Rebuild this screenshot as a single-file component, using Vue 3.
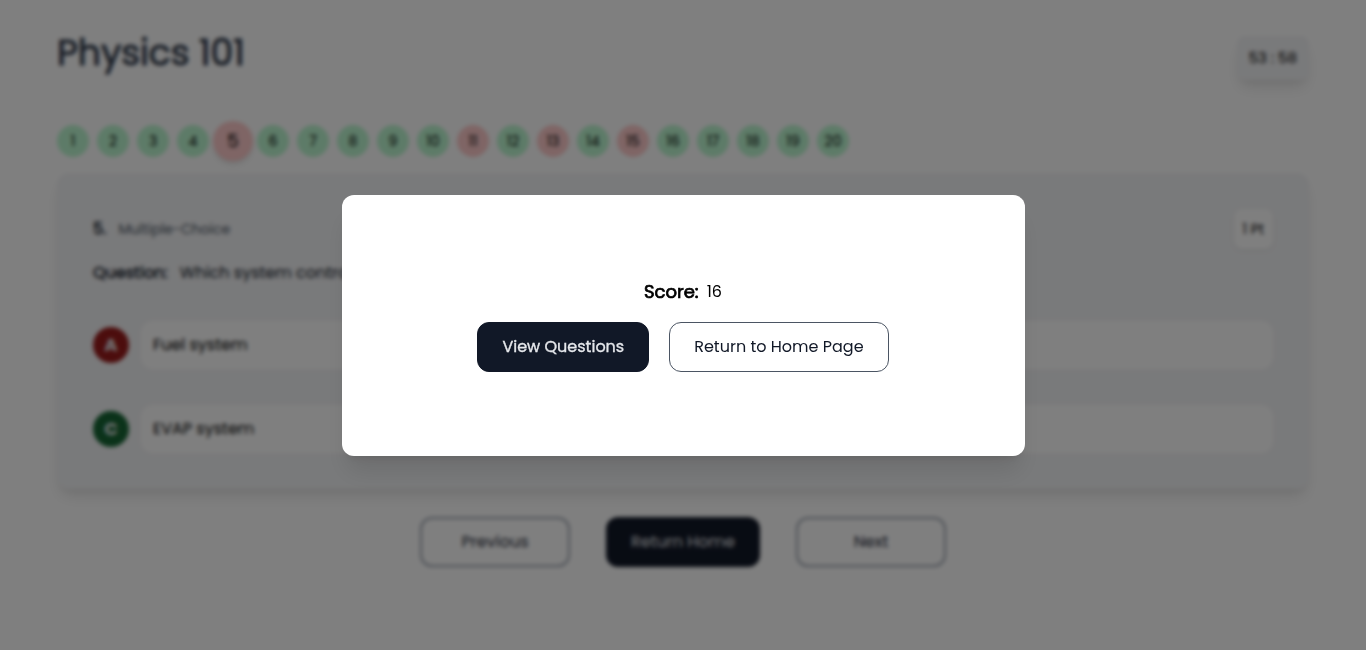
<script setup>
const wrong = [5, 11, 13, 15]
const current = 5
const questions = Array.from({ length: 20 }, (_, i) => i + 1)
const options = [
  { letter: 'A', text: 'Fuel system', state: 'wrong' },
  { letter: 'C', text: 'EVAP system', state: 'right' },
]
</script>

<template>
  <div class="page">
    <header class="top">
      <h1>Physics 101</h1>
      <div class="timer">53 : 58</div>
    </header>

    <nav class="numbers" aria-label="Questions">
      <button
        v-for="n in questions"
        :key="n"
        type="button"
        class="number"
        :class="{ wrong: wrong.includes(n), current: n === current }"
      >{{ n }}</button>
    </nav>

    <main class="card">
      <div class="meta">
        <div class="kind"><strong>5.</strong><span>Multiple-Choice</span></div>
        <div class="points">1 Pt</div>
      </div>
      <p class="question"><strong>Question:</strong><span>Which system controls</span></p>
      <div class="options">
        <div v-for="o in options" :key="o.letter" class="option">
          <button type="button" class="letter" :class="o.state">{{ o.letter }}</button>
          <div class="answer">{{ o.text }}</div>
        </div>
      </div>
    </main>

    <footer class="actions">
      <button type="button" class="step">Previous</button>
      <button type="button" class="home">Return Home</button>
      <button type="button" class="step">Next</button>
    </footer>
  </div>

  <div class="overlay">
    <section class="modal" role="dialog" aria-modal="true" aria-label="Score">
      <p class="score"><strong>Score:</strong><span>16</span></p>
      <div class="choices">
        <button type="button" class="view">View Questions</button>
        <button type="button" class="back">Return to Home Page</button>
      </div>
    </section>
  </div>
</template>

<style>
body {
  background: #fff;
}
</style>

<style scoped>
.page,
.overlay {
  font-family: Poppins, Inter, 'Open Sans', sans-serif;
  font-size: 16px;
  line-height: 24px;
  color: #111827;
  box-sizing: border-box;
}
button {
  font: inherit;
  color: inherit;
  border: 0;
  padding: 0;
  cursor: pointer;
}
h1,
p {
  margin: 0;
}
h1,
strong {
  font-weight: 400;
  -webkit-text-stroke: 0.03em currentColor;
}
.page {
  padding: 32px 57px;
}
.top {
  display: flex;
  justify-content: space-between;
  align-items: flex-start;
  height: 93px;
}
h1 {
  font-size: 36px;
  line-height: 42px;
  color: #374151;
}
.timer {
  margin-top: 4px;
  padding: 12px;
  font-size: 15px;
  line-height: 20px;
  color: #000;
  border-radius: 8px;
  background: #f3f4f6;
  box-shadow: 0 10px 15px -3px rgba(0, 0, 0, 0.1), 0 4px 6px -4px rgba(0, 0, 0, 0.1);
}
.numbers {
  display: flex;
  gap: 8px;
}
.number {
  width: 32px;
  height: 32px;
  border-radius: 50%;
  background: #bbf7d0;
  color: #000;
  font-size: 14px;
}
.number.wrong {
  background: #fecaca;
}
.number.current {
  width: 40px;
  height: 40px;
  margin: -4px;
  font-size: 18px;
  box-shadow: 0 4px 6px -1px rgba(0, 0, 0, 0.1), 0 2px 4px -2px rgba(0, 0, 0, 0.1);
}
.card {
  margin-top: 16px;
  padding: 36px;
  border-radius: 12px;
  background: #f3f4f6;
  box-shadow: 0 10px 15px -3px rgba(0, 0, 0, 0.1), 0 4px 6px -4px rgba(0, 0, 0, 0.1);
}
.meta {
  display: flex;
  justify-content: space-between;
  align-items: center;
}
.kind {
  display: flex;
  gap: 12px;
}
.kind span {
  font-size: 14px;
  color: #4b5563;
}
.points {
  padding: 10px 9px;
  border-radius: 8px;
  background: #fff;
  color: #000;
  font-size: 14px;
  line-height: 20px;
  box-shadow: 0 1px 3px rgba(0, 0, 0, 0.1);
}
.question {
  display: flex;
  gap: 12px;
  margin-top: 12px;
}
.options {
  display: grid;
  gap: 36px;
  margin-top: 36px;
}
.option {
  display: flex;
  align-items: center;
  gap: 12px;
  color: #000;
}
.letter {
  flex: none;
  width: 36px;
  height: 36px;
  border-radius: 50%;
  color: #e5e7eb;
  font-size: 18px;
  font-weight: 700;
}
.letter.wrong {
  background: #991b1b;
}
.letter.right {
  background: #166534;
}
.answer {
  flex: 1;
  padding: 12px;
  border-radius: 12px;
  background: #fff;
}
.actions {
  display: flex;
  justify-content: center;
  gap: 36px;
  margin-top: 28px;
}
.step {
  box-sizing: border-box;
  width: 150px;
  height: 50px;
  border: 2px solid #9ca3af;
  border-radius: 12px;
  background: #fff;
  color: #1f2937;
}
.home {
  height: 50px;
  padding: 0 25px;
  border-radius: 12px;
  background: #111827;
  color: #e5e7eb;
}
.overlay {
  position: fixed;
  inset: 0;
  display: grid;
  place-items: center;
  background: rgba(0, 0, 0, 0.5);
  backdrop-filter: blur(2px);
}
.modal {
  box-sizing: border-box;
  width: 50%;
  min-height: 261px;
  display: flex;
  flex-direction: column;
  align-items: center;
  justify-content: center;
  gap: 16px;
  border-radius: 12px;
  background: #fff;
  box-shadow: 0 20px 25px -5px rgba(0, 0, 0, 0.1), 0 8px 10px -6px rgba(0, 0, 0, 0.1);
}
.score {
  display: flex;
  align-items: center;
  gap: 8px;
  line-height: 28px;
  color: #000;
}
.score strong {
  font-size: 18px;
  -webkit-text-stroke: 0.04em currentColor;
}
.choices {
  display: flex;
  gap: 20px;
}
.view,
.back {
  box-sizing: border-box;
  height: 50px;
  padding: 0 24px;
  border: 1px solid #111827;
  border-radius: 12px;
  background: #fff;
}
.view {
  background: #111827;
  color: #e5e7eb;
  -webkit-text-stroke: 0.02em currentColor;
}
.back {
  border-color: #4b5563;
}
</style>
